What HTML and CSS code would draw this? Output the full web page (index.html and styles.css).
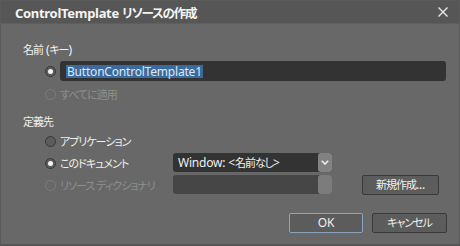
FILE: index.html
```html
<!DOCTYPE html>
<html lang="ja">
<head>
<meta charset="utf-8">
<title>ControlTemplate リソースの作成</title>
<link rel="stylesheet" href="styles.css">
</head>
<body>
<div class="window">
  <div class="titlebar">
    <span class="title">ControlTemplate <span class="ja">リソースの作成</span></span>
    <svg class="close" width="10" height="10" viewBox="0 0 10 10"><path d="M0.5 0.5 L9.5 9.5 M9.5 0.5 L0.5 9.5" stroke="#e8e8e8" stroke-width="1.4"/></svg>
  </div>
  <div class="content">
    <div class="label sec1"><span class="ja">名前</span> (<span class="ja">キー</span>)</div>
    <div class="row keyrow">
      <span class="radio checked"></span>
      <div class="input"><span class="sel">ButtonControlTemplate1</span></div>
    </div>
    <div class="row opt">
      <span class="radio disabled"></span>
      <span class="text dis ja">すべてに適用</span>
    </div>
    <div class="label sec2 ja">定義先</div>
    <div class="row opt">
      <span class="radio"></span>
      <span class="text ja">アプリケーション</span>
    </div>
    <div class="row opt">
      <div class="rcell">
        <span class="radio checked"></span>
        <span class="text ja">このドキュメント</span>
      </div>
      <div class="combo">
        <span class="ctext">Window: &lt;<span class="ja">名前なし</span>&gt;</span>
        <span class="cbtn"><svg width="8" height="5" viewBox="0 0 8 5"><path d="M0.8 0.8 L4 4 L7.2 0.8" fill="none" stroke="#f0f0f0" stroke-width="1.5"/></svg></span>
      </div>
    </div>
    <div class="row opt">
      <div class="rcell">
        <span class="radio disabled"></span>
        <span class="text dis ja">リソース ディクショナリ</span>
      </div>
      <div class="combo off">
        <span class="ctext"></span>
        <span class="cbtn"></span>
      </div>
      <button class="btn newbtn"><span class="ja">新規作成</span>...</button>
    </div>
    <div class="footer">
      <button class="btn ok">OK</button>
      <button class="btn cancel"><span class="ja">キャンセル</span></button>
    </div>
  </div>
</div>
</body>
</html>
```

FILE: styles.css
```css
html, body {
  margin: 0;
  padding: 0;
  background: #686868;
}
body {
  font-family: "Noto Sans", "Noto Sans CJK JP", sans-serif;
  font-size: 12px;
  color: #f0f0f0;
  font-feature-settings: "palt";
  letter-spacing: -0.2px;
}
.ja {
  font-size: 11px;
  letter-spacing: -1px;
}
.window {
  width: 460px;
  height: 246px;
  box-sizing: border-box;
  background: #686868;
  border: 1px solid #5a5a5a;
  border-bottom: 2px solid #555555;
}
.titlebar {
  height: 22px;
  background: #565656;
  border-bottom: 1px solid #5e5e5e;
  display: flex;
  align-items: center;
  justify-content: space-between;
  padding: 0 11px 0 14px;
}
.title {
  font-weight: bold;
  font-size: 13px;
  color: #f4f4f4;
  letter-spacing: -0.3px;
}
.title .ja {
  font-size: 12.5px;
  letter-spacing: -1.2px;
}
.close {
  display: block;
}
.content {
  padding: 0 13px 0 22px;
}
.label {
  height: 14px;
  line-height: 14px;
}
.sec1 { margin-top: 19px; }
.sec2 { margin-top: 10px; }
.row {
  display: flex;
  align-items: center;
  padding-left: 22px;
}
.keyrow {
  height: 20px;
  margin-top: 4px;
}
.opt {
  height: 22px;
}
.keyrow + .opt { margin-top: 2px; }
.sec2 + .opt { margin-top: 1px; }
.rcell {
  display: flex;
  align-items: center;
  width: 128px;
}
.radio {
  width: 9px;
  height: 9px;
  border-radius: 50%;
  border: 1px solid #383838;
  background: #5c5c5c;
  flex: none;
  position: relative;
  margin-right: 4px;
}
.radio.checked::after {
  content: "";
  position: absolute;
  left: 2px;
  top: 2px;
  width: 5px;
  height: 5px;
  border-radius: 50%;
  background: #f4f4f4;
}
.radio.disabled {
  border-color: #7c7c7c;
  background: transparent;
}
.text { white-space: nowrap; }
.dis { color: #8e8e8e; }
.input {
  flex: 1;
  height: 20px;
  background: #333333;
  border-radius: 3px;
  display: flex;
  align-items: center;
  padding-left: 6px;
}
.sel {
  background: #3a6a9e;
  color: #dce8f4;
  line-height: 13px;
  padding: 0 1px;
}
.combo {
  width: 159px;
  height: 19px;
  background: #333333;
  border-radius: 3px;
  display: flex;
  align-items: center;
  justify-content: space-between;
  margin-top: -2px;
}
.combo.off {
  background: #464646;
  margin-top: -1px;
}
.ctext {
  padding-left: 5px;
  white-space: nowrap;
}
.cbtn {
  width: 14px;
  height: 19px;
  background: #828282;
  border-radius: 3px;
  display: flex;
  align-items: center;
  justify-content: center;
}
.combo.off .cbtn { background: #7c7c7c; }
.btn {
  font-family: "Noto Sans", "Noto Sans CJK JP", sans-serif;
  font-size: 12px;
  font-feature-settings: "palt";
  letter-spacing: -0.2px;
  color: #f0f0f0;
  background: #5c5c5c;
  border: 1px solid #3a3a3a;
  border-radius: 2px;
  height: 20px;
  padding: 0;
  line-height: 16px;
}
.newbtn {
  width: 77px;
  margin-left: 30px;
  margin-top: -1px;
}
.footer {
  display: flex;
  justify-content: flex-end;
  gap: 9px;
  margin-top: 17px;
  margin-right: -1px;
}
.ok {
  width: 74px;
  border-color: #8aa4bd;
}
.cancel {
  width: 75px;
}
```
